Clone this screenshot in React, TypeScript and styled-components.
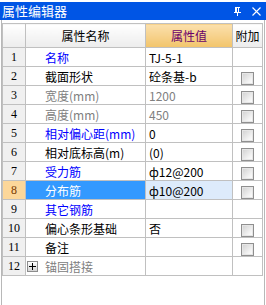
import styled, { createGlobalStyle, css } from 'styled-components'

const Global = createGlobalStyle`
  html, body {
    margin: 0;
    padding: 0;
    background: #fff;
  }
  body {
    font-family: "Noto Sans CJK SC", "Liberation Sans", sans-serif;
    font-size: 12px;
  }
`

type Tone = 'blue' | 'black' | 'gray'

type Row = {
  name: string
  value: string
  tone: Tone
  valueGray?: boolean
  check?: boolean
  expand?: boolean
}

const rows: Row[] = [
  { name: '名称', value: 'TJ-5-1', tone: 'blue' },
  { name: '截面形状', value: '砼条基-b', tone: 'black', check: true },
  { name: '宽度(mm)', value: '1200', tone: 'gray', valueGray: true, check: true },
  { name: '高度(mm)', value: '450', tone: 'gray', valueGray: true, check: true },
  { name: '相对偏心距(mm)', value: '0', tone: 'blue', check: true },
  { name: '相对底标高(m)', value: '(0)', tone: 'black', check: true },
  { name: '受力筋', value: 'ф12@200', tone: 'blue', check: true },
  { name: '分布筋', value: 'ф10@200', tone: 'blue', check: true },
  { name: '其它钢筋', value: '', tone: 'blue' },
  { name: '偏心条形基础', value: '否', tone: 'black', check: true },
  { name: '备注', value: '', tone: 'black', check: true },
  { name: '锚固搭接', value: '', tone: 'gray', expand: true },
]

const SELECTED = 7

const toneColor: Record<Tone, string> = {
  blue: '#0000ff',
  black: '#000',
  gray: '#808080',
}

const Panel = styled.div`
  width: 266px;
  height: 305px;
  display: flex;
  flex-direction: column;
  box-sizing: border-box;
`

const TitleBar = styled.div`
  margin-top: 2px;
  height: 18px;
  background: #0055e5;
  color: #fff;
  display: flex;
  align-items: center;
  padding: 0 5px 0 2px;
  font-size: 13px;
`

const Title = styled.span`
  flex: 1;
  line-height: 18px;
`

const TitleIcon = styled.svg`
  width: 9px;
  height: 9px;
  margin-left: 10px;
`

const Body = styled.div`
  flex: 1;
  margin: 0 1px 0 1px;
  border-left: 1px solid #b8b8b8;
  border-right: 1px solid #b8b8b8;
  padding-top: 3px;
`

const Grid = styled.table`
  border-collapse: collapse;
  table-layout: fixed;
  width: 261px;
  margin-left: 0;
`

const headCell = css`
  border: 1px solid #c0c0c0;
  height: 23px;
  padding: 0;
  font-weight: normal;
  text-align: center;
  font-size: 12px;
`

const HeadCell = styled.th<{ $hot?: boolean }>`
  ${headCell};
  background: ${p =>
    p.$hot
      ? 'linear-gradient(#fbe0ae, #f2c46a)'
      : 'linear-gradient(#ffffff, #ececec)'};
  color: ${p => (p.$hot ? '#6a006a' : '#000')};
`

const NumCell = styled.td<{ $sel?: boolean }>`
  border: 1px solid #c0c0c0;
  height: 18px;
  padding: 0;
  text-align: center;
  font-family: "Liberation Serif", serif;
  font-size: 12px;
  background: ${p => (p.$sel ? '#fcd79a' : '#f0f0f0')};
  color: ${p => (p.$sel ? '#7a3a00' : '#000')};
`

const NameCell = styled.td<{ $tone: Tone; $sel?: boolean }>`
  border: 1px solid #c0c0c0;
  padding: 0;
  background: ${p => (p.$sel ? '#3399ff' : '#fff')};
  color: ${p => (p.$sel ? '#fff' : toneColor[p.$tone])};
  white-space: nowrap;
  overflow: hidden;
`

const NameInner = styled.div`
  display: flex;
  align-items: center;
  height: 18px;
`

const Indent = styled.span`
  width: 18px;
  flex: none;
  display: flex;
  align-items: center;
  padding-left: 1px;
`

const ExpandBox = styled.span`
  width: 9px;
  height: 9px;
  border: 1px solid #8c8c8c;
  background: linear-gradient(#ffffff, #d4d4d4);
  position: relative;

  &::before,
  &::after {
    content: '';
    position: absolute;
    background: #000;
  }
  &::before {
    left: 1px;
    right: 1px;
    top: 4px;
    height: 1px;
  }
  &::after {
    top: 1px;
    bottom: 1px;
    left: 4px;
    width: 1px;
  }
`

const ValueCell = styled.td<{ $gray?: boolean; $sel?: boolean }>`
  border: 1px solid #c0c0c0;
  padding: 0 0 0 3px;
  background: ${p => (p.$sel ? '#ddebfb' : '#fff')};
  color: ${p => (p.$gray ? '#808080' : '#000')};
  white-space: nowrap;
  overflow: hidden;
`

const CheckCell = styled.td`
  border: 1px solid #c0c0c0;
  padding: 0;
  text-align: center;
  background: #fff;
`

const Check = styled.span`
  display: inline-block;
  vertical-align: middle;
  width: 11px;
  height: 11px;
  border: 1px solid #8f8f8f;
  background: linear-gradient(135deg, #cfcfcf, #f4f4f4 70%, #ffffff);
  box-shadow: inset 0 0 0 1px #e6e6e6;
`

export default function App() {
  return (
    <>
      <Global />
      <Panel>
        <TitleBar>
          <Title>属性编辑器</Title>
          <TitleIcon viewBox="0 0 9 9">
            <path d="M2 0.5h5M2.5 0.5v5M5.5 0.5v5M3.5 0.5v5M1 5.5h7M4.5 5.5v3.5" stroke="#fff" strokeWidth="1" fill="none" />
          </TitleIcon>
          <TitleIcon viewBox="0 0 9 9">
            <path d="M0.5 0.5l8 8M8.5 0.5l-8 8" stroke="#fff" strokeWidth="1.1" fill="none" />
          </TitleIcon>
        </TitleBar>
        <Body>
          <Grid>
            <colgroup>
              <col style={{ width: 23 }} />
              <col style={{ width: 120 }} />
              <col style={{ width: 87 }} />
              <col style={{ width: 30 }} />
            </colgroup>
            <thead>
              <tr>
                <HeadCell />
                <HeadCell>属性名称</HeadCell>
                <HeadCell $hot>属性值</HeadCell>
                <HeadCell>附加</HeadCell>
              </tr>
            </thead>
            <tbody>
              {rows.map((r, i) => {
                const sel = i === SELECTED
                return (
                  <tr key={i}>
                    <NumCell $sel={sel}>{i + 1}</NumCell>
                    <NameCell $tone={r.tone} $sel={sel}>
                      <NameInner>
                        <Indent>{r.expand && <ExpandBox />}</Indent>
                        {r.name}
                      </NameInner>
                    </NameCell>
                    <ValueCell $gray={r.valueGray} $sel={sel}>
                      {r.value}
                    </ValueCell>
                    <CheckCell>{r.check && <Check />}</CheckCell>
                  </tr>
                )
              })}
            </tbody>
          </Grid>
        </Body>
      </Panel>
    </>
  )
}
